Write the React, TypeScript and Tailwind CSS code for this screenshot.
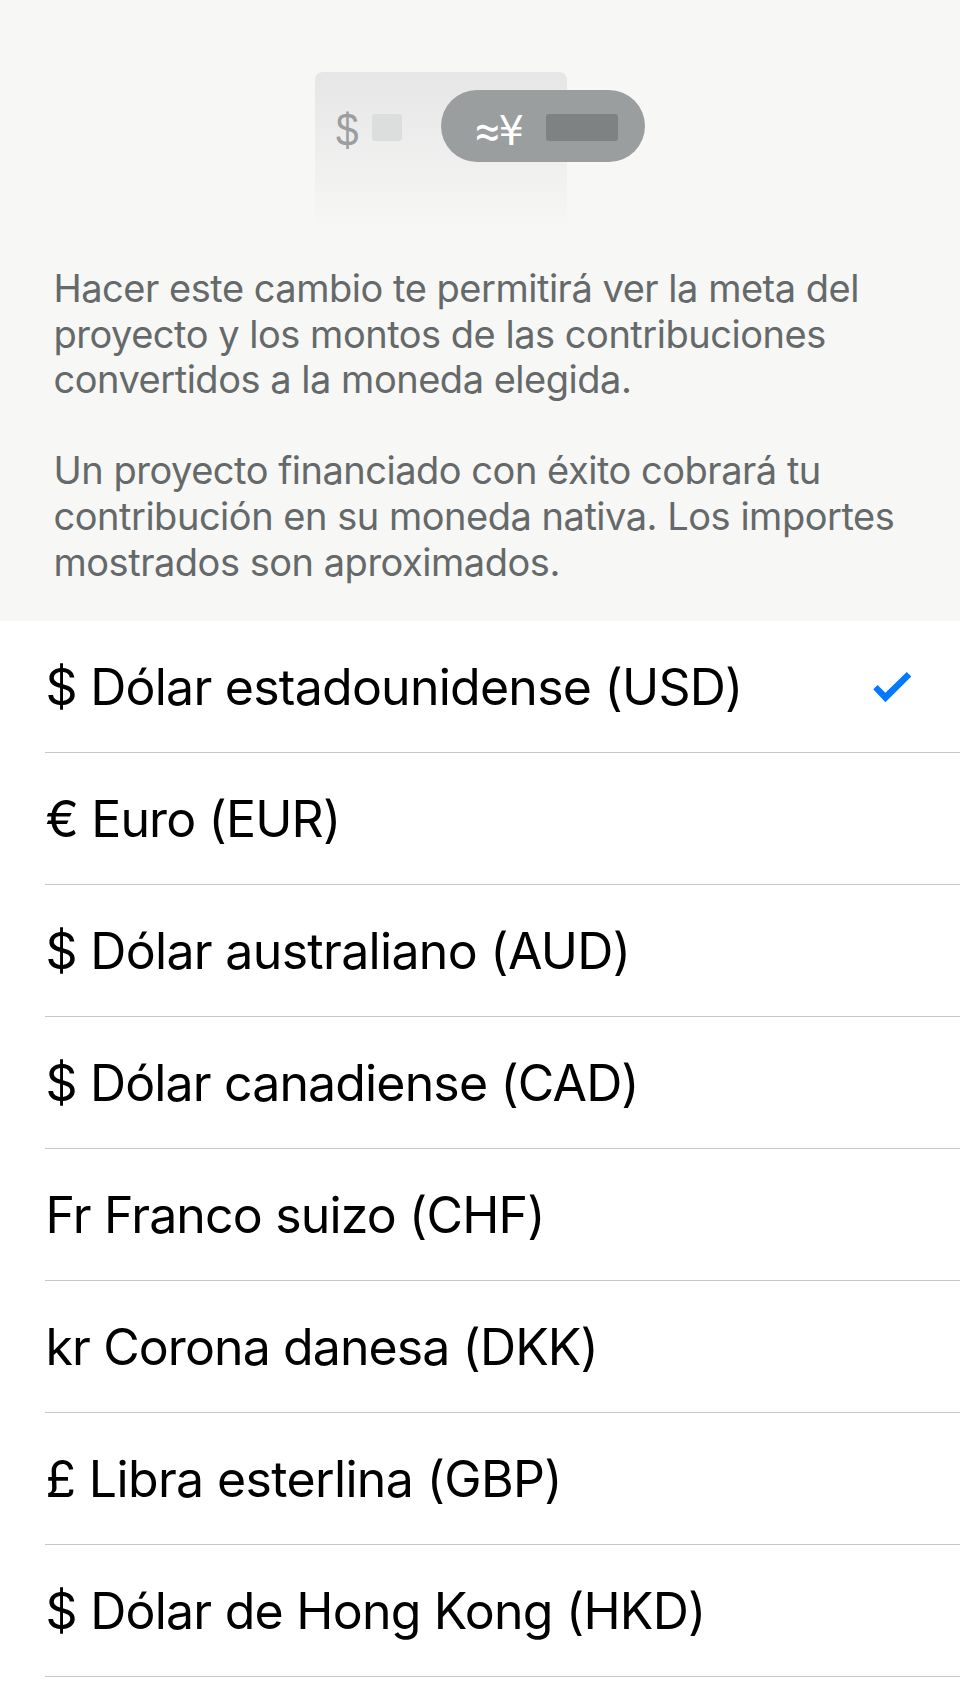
const paragraphs = [
  [
    'Hacer este cambio te permitirá ver la meta del',
    'proyecto y los montos de las contribuciones',
    'convertidos a la moneda elegida.',
  ],
  [
    'Un proyecto financiado con éxito cobrará tu',
    'contribución en su moneda nativa. Los importes',
    'mostrados son aproximados.',
  ],
];

const currencies = [
  { symbol: '$', label: 'Dólar estadounidense (USD)', tracking: 'tracking-[-0.75px]', selected: true },
  { symbol: '€', label: 'Euro (EUR)', tracking: 'tracking-[-0.85px]' },
  { symbol: '$', label: 'Dólar australiano (AUD)', tracking: 'tracking-[-0.68px]' },
  { symbol: '$', label: 'Dólar canadiense (CAD)', tracking: 'tracking-[-0.85px]' },
  { symbol: 'Fr', label: 'Franco suizo (CHF)', tracking: 'tracking-[-0.84px]' },
  { symbol: 'kr', label: 'Corona danesa (DKK)', tracking: 'tracking-[-0.9px]' },
  { symbol: '£', label: 'Libra esterlina (GBP)', tracking: 'tracking-[-0.64px]' },
  { symbol: '$', label: 'Dólar de Hong Kong (HKD)', tracking: 'tracking-[-0.76px]' },
];

function ConversionArt() {
  return (
    <div className="relative ml-[315px] h-[160px] w-[252px] rounded-t-lg bg-linear-to-b from-[#e6e6e6] to-[#f7f7f6]">
      <div className="flex h-[111px] items-center pl-[21px]">
        <span className="mt-[5px] w-[36px] font-['Liberation_Sans',sans-serif] text-[46px] leading-none text-[#9b9e9e]">
          <span className="inline-block origin-left scale-x-[0.88]">$</span>
        </span>
        <span className="h-[27px] w-[30px] rounded-[3px] bg-[#dcdedd]" />
      </div>
      <div className="absolute left-[126px] top-[18px] flex h-[72px] w-[204px] items-center rounded-full bg-[#9b9e9e] pl-[34px] pr-[27px] pt-[3px] leading-none text-white">
        <span className="mt-[7px] w-[23.5px] font-['Roboto',sans-serif] text-[45px]">≈</span>
        <span className="mt-[6px] font-['DejaVu_Sans',sans-serif] text-[40px]">¥</span>
        <span className="ml-auto h-[27px] w-[72px] rounded-[3px] bg-[#7f8282]" />
      </div>
    </div>
  );
}

export default function App() {
  return (
    <main className="h-[1704px] w-[960px] overflow-hidden bg-white font-['Inter','Liberation_Sans',sans-serif]">
      <header className="h-[621px] bg-[#f7f7f6] pt-[72px]">
        <ConversionArt />
        <div className="mt-[34px] flex flex-col gap-[45.6px] pl-[53.5px] text-[38px] leading-[45.6px] text-[#656969]">
          {paragraphs.map((lines, i) => (
            <p key={i}>
              {lines.map((line) => (
                <span key={line} className="block whitespace-nowrap tracking-[-0.48px]">{line}</span>
              ))}
            </p>
          ))}
        </div>
      </header>
      <ul className="text-[50px] text-black">
        {currencies.map((c) => (
          <li key={c.label} className="ml-[45px] flex h-[132px] items-center justify-between border-b border-[#c8c7cc] pl-[0.5px] pr-[48px]">
            <span className={`mt-[2px] whitespace-nowrap ${c.tracking}`}>{c.symbol} {c.label}</span>
            {c.selected && (
              <svg className="mt-px" width="39" height="31" viewBox="0 0 39 31" fill="#007aff" aria-hidden="true">
                <path d="M0.3 17.2 4.5 13 12.4 20.8 33.8 0 38.3 4.4 12.4 30.2Z" />
              </svg>
            )}
          </li>
        ))}
      </ul>
    </main>
  );
}
